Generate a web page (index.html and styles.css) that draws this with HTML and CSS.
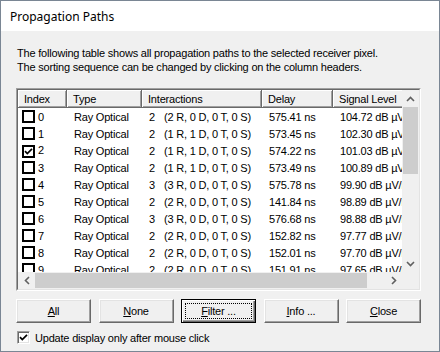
FILE: index.html
```html
<!DOCTYPE html>
<html lang="en">
<head>
    <meta charset="UTF-8">
    <title>Propagation Paths</title>
    <link rel="stylesheet" href="styles.css">
</head>
<body>
    <div class="window">
        <div class="titlebar">Propagation Paths</div>
        <div class="client">
            <p class="desc">The following table shows all propagation paths to the selected receiver pixel.<br>The sorting sequence can be changed by clicking on the column headers.</p>

            <div class="listview">
                <div class="lv-inner">
                    <div class="lv-view">
                        <table class="lv-table">
                            <colgroup>
                                <col class="c-index">
                                <col class="c-type">
                                <col class="c-inter">
                                <col class="c-delay">
                                <col class="c-level">
                            </colgroup>
                            <thead>
                                <tr>
                                    <th>Index</th>
                                    <th>Type</th>
                                    <th>Interactions</th>
                                    <th>Delay</th>
                                    <th>Signal Level</th>
                                </tr>
                            </thead>
                            <tbody>
                                <tr><td class="idx"><span class="cb"></span>0</td><td>Ray Optical</td><td><span class="n">2</span>(2 R, 0 D, 0 T, 0 S)</td><td>575.41 ns</td><td>104.72 dB µV/m</td></tr>
                                <tr><td class="idx"><span class="cb"></span>1</td><td>Ray Optical</td><td><span class="n">2</span>(1 R, 1 D, 0 T, 0 S)</td><td>573.45 ns</td><td>102.30 dB µV/m</td></tr>
                                <tr><td class="idx"><span class="cb"><svg width="9" height="9" viewBox="0 0 9 9"><polyline points="1,4.2 3.3,6.6 8,1.8" fill="none" stroke="#000" stroke-width="1.7"/></svg></span>2</td><td>Ray Optical</td><td><span class="n">2</span>(1 R, 1 D, 0 T, 0 S)</td><td>574.22 ns</td><td>101.03 dB µV/m</td></tr>
                                <tr><td class="idx"><span class="cb"></span>3</td><td>Ray Optical</td><td><span class="n">2</span>(1 R, 1 D, 0 T, 0 S)</td><td>573.49 ns</td><td>100.89 dB µV/m</td></tr>
                                <tr><td class="idx"><span class="cb"></span>4</td><td>Ray Optical</td><td><span class="n">3</span>(3 R, 0 D, 0 T, 0 S)</td><td>575.78 ns</td><td>99.90 dB µV/m</td></tr>
                                <tr><td class="idx"><span class="cb"></span>5</td><td>Ray Optical</td><td><span class="n">2</span>(2 R, 0 D, 0 T, 0 S)</td><td>141.84 ns</td><td>98.89 dB µV/m</td></tr>
                                <tr><td class="idx"><span class="cb"></span>6</td><td>Ray Optical</td><td><span class="n">3</span>(3 R, 0 D, 0 T, 0 S)</td><td>576.68 ns</td><td>98.88 dB µV/m</td></tr>
                                <tr><td class="idx"><span class="cb"></span>7</td><td>Ray Optical</td><td><span class="n">2</span>(2 R, 0 D, 0 T, 0 S)</td><td>152.82 ns</td><td>97.77 dB µV/m</td></tr>
                                <tr><td class="idx"><span class="cb"></span>8</td><td>Ray Optical</td><td><span class="n">2</span>(2 R, 0 D, 0 T, 0 S)</td><td>152.01 ns</td><td>97.70 dB µV/m</td></tr>
                                <tr><td class="idx"><span class="cb"></span>9</td><td>Ray Optical</td><td><span class="n">2</span>(2 R, 0 D, 0 T, 0 S)</td><td>151.91 ns</td><td>97.65 dB µV/m</td></tr>
                            </tbody>
                        </table>
                    </div>

                    <div class="vscroll">
                        <div class="sb-btn"><svg width="9" height="6" viewBox="0 0 9 6"><polyline points="1,5 4.5,1.5 8,5" fill="none" stroke="#606060" stroke-width="1.6"/></svg></div>
                        <div class="sb-track"><div class="sb-thumb-v"></div></div>
                        <div class="sb-btn"><svg width="9" height="6" viewBox="0 0 9 6"><polyline points="1,1 4.5,4.5 8,1" fill="none" stroke="#606060" stroke-width="1.6"/></svg></div>
                    </div>

                    <div class="hscroll">
                        <div class="sb-btn"><svg width="6" height="9" viewBox="0 0 6 9"><polyline points="5,1 1.5,4.5 5,8" fill="none" stroke="#606060" stroke-width="1.6"/></svg></div>
                        <div class="sb-track-h"><div class="sb-thumb-h"></div></div>
                        <div class="sb-btn"><svg width="6" height="9" viewBox="0 0 6 9"><polyline points="1,1 4.5,4.5 1,8" fill="none" stroke="#606060" stroke-width="1.6"/></svg></div>
                    </div>

                    <div class="sb-corner"></div>
                </div>
            </div>

            <div class="buttons">
                <button class="btn"><span><u>A</u>ll</span></button>
                <button class="btn"><span><u>N</u>one</span></button>
                <button class="btn btn-default"><span class="focus"><u>F</u>ilter ...</span></button>
                <button class="btn"><span><u>I</u>nfo ...</span></button>
                <button class="btn"><span><u>C</u>lose</span></button>
            </div>

            <div class="check-row">
                <span class="check"><svg width="9" height="9" viewBox="0 0 9 9"><polyline points="1,4.2 3.3,6.6 8,1.8" fill="none" stroke="#000" stroke-width="1.7"/></svg></span>
                <span>Update display only after mouse click</span>
            </div>
        </div>
    </div>
</body>
</html>
```

FILE: styles.css
```css
* {
    margin: 0;
    padding: 0;
    box-sizing: border-box;
}

body {
    width: 440px;
    height: 352px;
    overflow: hidden;
    background-color: #f0f0f0;
    font-family: 'Liberation Sans', Arial, sans-serif;
    font-size: 11px;
    letter-spacing: -0.2px;
    color: #000;
}

.window {
    width: 440px;
    height: 352px;
    border: 1px solid #7a8694;
    background-color: #f0f0f0;
    display: flex;
    flex-direction: column;
}

.titlebar {
    height: 30px;
    background-color: #fff;
    padding-left: 9px;
    display: flex;
    align-items: center;
    font-family: 'Noto Sans', sans-serif;
    font-size: 12px;
    letter-spacing: 0;
}

.client {
    padding: 15px 18px 0 15px;
}

.desc {
    line-height: 14px;
    padding-left: 1px;
    margin-bottom: 14px;
}

/* list view */
.listview {
    width: 405px;
    height: 203px;
    border: 1px solid;
    border-color: #a0a0a0 #fff #fff #a0a0a0;
}

.lv-inner {
    height: 100%;
    border: 1px solid;
    border-color: #696969 #e3e3e3 #e3e3e3 #696969;
    background-color: #fff;
    display: grid;
    grid-template-columns: 384px 17px;
    grid-template-rows: 182px 17px;
}

.lv-view {
    overflow: hidden;
}

.lv-table {
    table-layout: fixed;
    width: 433px;
    border-collapse: separate;
    border-spacing: 0;
}

.c-index { width: 49px; }
.c-type { width: 75px; }
.c-inter { width: 120px; }
.c-delay { width: 71px; }
.c-level { width: 118px; }

.lv-table th {
    height: 18px;
    padding-left: 6px;
    text-align: left;
    font-weight: normal;
    white-space: nowrap;
    overflow: hidden;
    background-color: #f0f0f0;
    border-right: 1px solid #696969;
    border-bottom: 1px solid #696969;
    box-shadow: inset 1px 1px #fff, inset -1px -1px #a0a0a0;
}

.lv-table td {
    height: 17px;
    padding-left: 7px;
    white-space: nowrap;
    overflow: hidden;
}

.lv-table td.idx {
    padding-left: 4px;
}

.cb {
    display: inline-flex;
    align-items: center;
    justify-content: center;
    width: 13px;
    height: 13px;
    border: 2px solid #000;
    background-color: #fff;
    vertical-align: -2px;
    margin-right: 3px;
}

.n {
    display: inline-block;
    width: 15px;
}

/* scroll bars */
.vscroll {
    background-color: #f0f0f0;
    display: flex;
    flex-direction: column;
}

.sb-btn {
    width: 17px;
    height: 17px;
    flex: none;
    display: flex;
    align-items: center;
    justify-content: center;
}

.sb-track {
    flex: 1;
}

.sb-thumb-v {
    height: 67px;
    margin: 0 1px;
    background-color: #cdcdcd;
}

.hscroll {
    background-color: #f0f0f0;
    display: flex;
}

.sb-track-h {
    flex: 1;
    padding: 1px 0;
}

.sb-thumb-h {
    width: 332px;
    height: 100%;
    background-color: #cdcdcd;
}

.sb-corner {
    background-color: #f0f0f0;
}

/* buttons */
.buttons {
    width: 405px;
    margin-top: 8px;
    display: flex;
    justify-content: space-between;
}

.btn {
    width: 75px;
    height: 24px;
    background-color: #f0f0f0;
    border: 1px solid;
    border-color: #fff #696969 #696969 #fff;
    box-shadow: inset -1px -1px #a0a0a0, inset 1px 1px #e3e3e3;
    font: inherit;
    letter-spacing: inherit;
    color: #000;
    display: flex;
    align-items: center;
    justify-content: center;
}

.btn-default {
    border: 1px solid #000;
    box-shadow: inset 1px 1px #fff, inset -1px -1px #696969, inset -2px -2px #a0a0a0;
    padding: 3px;
}

.btn-default .focus {
    flex: 1;
    align-self: stretch;
    border: 1px dotted #000;
    display: flex;
    align-items: center;
    justify-content: center;
}

/* bottom checkbox */
.check-row {
    margin-top: 8px;
    padding-left: 1px;
    display: flex;
    align-items: center;
    gap: 5px;
}

.check {
    width: 13px;
    height: 13px;
    background-color: #fff;
    border: 1px solid;
    border-color: #a0a0a0 #fff #fff #a0a0a0;
    box-shadow: inset 1px 1px #696969, inset -1px -1px #e3e3e3;
    display: flex;
    align-items: center;
    justify-content: center;
}
```
